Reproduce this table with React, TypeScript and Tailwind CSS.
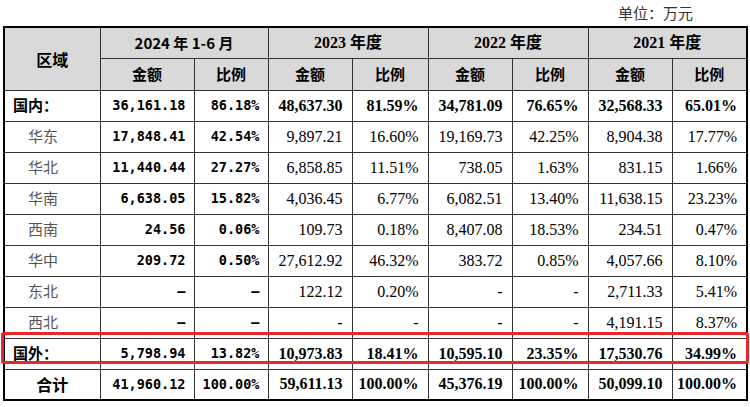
import React from "react";

type Row = {
  name: string;
  kind: "group" | "sub" | "total";
  v24: [string, string];
  rest: [string, string][];
};

const rows: Row[] = [
  { name: "国内：", kind: "group", v24: ["36,161.18", "86.18%"], rest: [["48,637.30", "81.59%"], ["34,781.09", "76.65%"], ["32,568.33", "65.01%"]] },
  { name: "华东", kind: "sub", v24: ["17,848.41", "42.54%"], rest: [["9,897.21", "16.60%"], ["19,169.73", "42.25%"], ["8,904.38", "17.77%"]] },
  { name: "华北", kind: "sub", v24: ["11,440.44", "27.27%"], rest: [["6,858.85", "11.51%"], ["738.05", "1.63%"], ["831.15", "1.66%"]] },
  { name: "华南", kind: "sub", v24: ["6,638.05", "15.82%"], rest: [["4,036.45", "6.77%"], ["6,082.51", "13.40%"], ["11,638.15", "23.23%"]] },
  { name: "西南", kind: "sub", v24: ["24.56", "0.06%"], rest: [["109.73", "0.18%"], ["8,407.08", "18.53%"], ["234.51", "0.47%"]] },
  { name: "华中", kind: "sub", v24: ["209.72", "0.50%"], rest: [["27,612.92", "46.32%"], ["383.72", "0.85%"], ["4,057.66", "8.10%"]] },
  { name: "东北", kind: "sub", v24: ["–", "–"], rest: [["122.12", "0.20%"], ["-", "-"], ["2,711.33", "5.41%"]] },
  { name: "西北", kind: "sub", v24: ["–", "–"], rest: [["-", "-"], ["-", "-"], ["4,191.15", "8.37%"]] },
  { name: "国外：", kind: "group", v24: ["5,798.94", "13.82%"], rest: [["10,973.83", "18.41%"], ["10,595.10", "23.35%"], ["17,530.76", "34.99%"]] },
  { name: "合计", kind: "total", v24: ["41,960.12", "100.00%"], rest: [["59,611.13", "100.00%"], ["45,376.19", "100.00%"], ["50,099.10", "100.00%"]] },
];

const widths = [96, 94, 74, 84, 76, 84, 76, 84, 75];

const cjk = "font-['Noto_Sans_CJK_SC',sans-serif]";
const serif = "font-['Liberation_Serif','Noto_Sans_CJK_SC',serif]";
const mono = "font-['DejaVu_Sans_Mono',monospace]";

export default function App() {
  const cell = "border border-[#333]";
  return (
    <div className="w-[750px] h-[407px] bg-white text-black">
      <div className={`h-[26px] flex items-center justify-end pr-[57px] text-[15px] text-[#333] ${cjk}`}>
        单位：万元
      </div>
      <div className="relative ml-[3px]">
        <table className="table-fixed border-collapse border-2 border-black w-[745px]">
          <colgroup>
            {widths.map((w, i) => (
              <col key={i} style={{ width: w }} />
            ))}
          </colgroup>
          <thead>
            <tr className="h-[31px] bg-[#d9d9d9]">
              <th rowSpan={2} className={`${cell} ${cjk} text-[16px] font-bold`}>区域</th>
              <th colSpan={2} className={`${cell} ${cjk} text-[15px] font-bold`}>2024 年 1-6 月</th>
              <th colSpan={2} className={`${cell} ${serif} text-[16px] font-bold`}>2023 年度</th>
              <th colSpan={2} className={`${cell} ${serif} text-[16px] font-bold`}>2022 年度</th>
              <th colSpan={2} className={`${cell} ${serif} text-[16px] font-bold`}>2021 年度</th>
            </tr>
            <tr className="h-[32px] bg-[#d9d9d9]">
              {Array.from({ length: 4 }).flatMap((_, i) => [
                <th key={`a${i}`} className={`${cell} ${cjk} text-[15px] font-bold`}>金额</th>,
                <th key={`b${i}`} className={`${cell} ${cjk} text-[15px] font-bold`}>比例</th>,
              ])}
            </tr>
          </thead>
          <tbody>
            {rows.map((r) => {
              const bold = r.kind !== "sub";
              return (
                <tr key={r.name} className="h-[31px]">
                  {r.kind === "group" && (
                    <td className={`${cell} ${cjk} text-[15px] font-bold pl-[8px]`}>{r.name}</td>
                  )}
                  {r.kind === "sub" && (
                    <td className={`${cell} ${cjk} text-[15px] text-[#555] pl-[23px]`}>{r.name}</td>
                  )}
                  {r.kind === "total" && (
                    <td className={`${cell} ${cjk} text-[16px] font-bold text-center`}>{r.name}</td>
                  )}
                  <td className={`${cell} ${mono} text-[13.5px] font-bold text-right pr-[8px]`}>{r.v24[0]}</td>
                  <td className={`${cell} ${mono} text-[13.5px] font-bold text-right pr-[8px]`}>{r.v24[1]}</td>
                  {r.rest.flatMap(([a, b], i) => [
                    <td key={`a${i}`} className={`${cell} ${serif} text-[16px] text-right pr-[9px] ${bold ? "font-bold" : ""}`}>{a}</td>,
                    <td key={`b${i}`} className={`${cell} ${serif} text-[16px] text-right pr-[9px] ${bold ? "font-bold" : ""}`}>{b}</td>,
                  ])}
                </tr>
              );
            })}
          </tbody>
        </table>
        {/* highlight box around 国外 row */}
        <div className="absolute left-[-2px] top-[306px] w-[748px] h-[32px] border-[3px] border-[#e8262b] rounded-[3px] pointer-events-none" />
      </div>
    </div>
  );
}
